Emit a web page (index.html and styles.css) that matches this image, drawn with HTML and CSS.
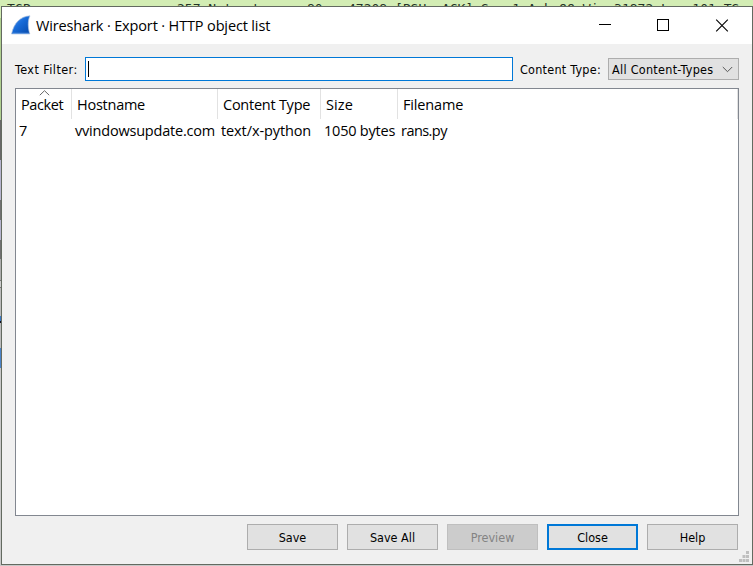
FILE: index.html
```html
<!DOCTYPE html>
<html lang="en">
<head>
<meta charset="utf-8">
<title>Wireshark · Export · HTTP object list</title>
<link rel="stylesheet" href="styles.css">
</head>
<body>
<div class="backdrop">
  <div class="packet-line"><span class="proto">TCP</span><span class="len">257 Net</span><span class="dot">t</span><span class="port">80</span><span class="info">47208 [PSH, ACK] Seq=1 Ack=99 Win=31872 Len=101 TS</span></div>
</div>
<main class="dialog">
  <header class="titlebar">
    <svg class="fin" width="20" height="20" viewBox="0 0 20 20"><defs><linearGradient id="fin" x1="0" y1="0" x2="1" y2="1"><stop offset="0" stop-color="#5a9af0"/><stop offset=".45" stop-color="#176bd8"/><stop offset="1" stop-color="#0749a9"/></linearGradient></defs><path d="M.5 19C3 8 9 1.500 19 .8C16.500 6 17 13 18.800 19Z" fill="url(#fin)" stroke="#b3c6df" stroke-width=".7"/><path d="M1.500 18.300H18" stroke="#6b9fe3" stroke-width="1"/></svg>
    <h1>Wireshark · Export · HTTP object list</h1>
    <svg class="controls" width="132" height="14" viewBox="0 0 132 14" fill="none" stroke="#000"><path d="M0 5.500H12M58.500 .5H69.500V11.500H58.500Z" shape-rendering="crispEdges"/><path d="M117.200 .7L128.800 12.300M128.800 .7L117.200 12.300" stroke-width="1.100"/></svg>
  </header>
  <section class="content">
    <div class="filters">
      <label class="label-filter">Text Filter:</label>
      <div class="input"><i class="caret"></i></div>
      <label class="label-type">Content Type:</label>
      <div class="combo"><span>All Content-Types</span><svg width="11" height="7" viewBox="0 0 11 7"><path d="M.8 1L5.500 5.700L10.200 1" fill="none" stroke="#555"/></svg></div>
    </div>
    <div class="table">
      <div class="row head">
        <div><svg class="sort" width="11" height="6" viewBox="0 0 11 6"><path d="M.8 5.200L5.500 .7L10.200 5.200" fill="none" stroke="#666"/></svg><span class="h-packet">Packet</span></div><div><span class="h-host">Hostname</span></div><div><span class="h-type">Content Type</span></div><div><span class="h-size">Size</span></div><div><span class="h-file">Filename</span></div>
      </div>
      <div class="row data">
        <div>7</div><div><span class="d-host">vvindowsupdate.com</span></div><div><span class="d-type">text/x-python</span></div><div><span class="d-size">1050 bytes</span></div><div><span class="d-file">rans.py</span></div>
      </div>
    </div>
    <footer class="actions">
      <div class="button">Save</div><div class="button">Save All</div><div class="button disabled">Preview</div><div class="button primary">Close</div><div class="button">Help</div>
    </footer>
  </section>
  <svg class="grip" width="10" height="11" viewBox="0 0 10 11" fill="#bfbfbf"><path d="M7 0h3v3H7zM3.500 4h3v3h-3zM7 4h3v3H7zM0 8h3v3H0zM3.500 8h3v3h-3zM7 8h3v3H7z"/></svg>
</main>
</body>
</html>
```
FILE: styles.css
```css
* { box-sizing: border-box; }
body { margin: 0; width: 753px; height: 566px; overflow: hidden; position: relative; background: #c8c8c8; font-family: "Open Sans", "Noto Sans", sans-serif; color: #000; }
.backdrop { position: absolute; inset: 0; background: linear-gradient(#b0d090 0 120px, #686868 120px 160px, #b6b4cf 160px 200px, #707070 200px 220px, #b6b4cf 220px 240px, #707070 240px 259px, #adadad 259px 280px, #777 280px 281px, #ccc 281px 287px, #777 287px 288px, #bbb 288px 316px, #3b79c4 316px 321px, #112 321px 323px, #bbb 323px 348px, #4b83c8 348px 368px, #c8c8c8 368px); }
.packet-line { height: 18px; background: #d3edb4; display: flex; padding: 0 0 0 7px; font: 13px/17px "DejaVu Sans Mono", monospace; color: #243327; white-space: pre; }
.packet-line span { flex: none; }
.proto { width: 170px; }
.len { width: 75px; }
.dot { width: 55px; }
.port { width: 41px; }
.dialog { position: absolute; left: 1px; top: 6px; width: 752px; height: 559px; border: 1px solid #636a60; background: #f0f0f0; display: flex; flex-direction: column; }
.titlebar { height: 37px; flex: none; background: #fff; display: flex; align-items: center; padding: 0 21px 0 9px; }
.fin { margin-top: -1px; }
h1 { margin: 0 auto 0 5px; font-size: 14.5px; font-weight: 400; line-height: 20px; letter-spacing: -.14px; white-space: nowrap; }
.content { padding: 13px 13px 0; display: flex; flex-direction: column; }
.filters { height: 24px; display: flex; align-items: center; font: 12.500px/16px "DejaVu Sans Condensed", "DejaVu Sans", sans-serif; font-stretch: condensed; white-space: nowrap; }
.label-filter { width: 70px; letter-spacing: .44px; padding-top: 2px; }
.input { width: 428px; height: 24px; background: #fff; border: 1px solid #0078d7; padding: 3px 2px; }
.caret { display: block; width: 1px; height: 16px; background: #000; }
.label-type { width: 88px; margin-left: 7px; letter-spacing: .25px; padding-top: 2px; }
.combo { width: 131px; height: 22px; border: 1px solid #adadad; background: #e1e1e1; display: flex; align-items: center; justify-content: space-between; padding: 0 5px 0 3px; }
.combo span { letter-spacing: .28px; padding-top: 1px; }
.table { height: 428px; margin-top: 7px; background: #fff; border: 1px solid #828790; width: 724px; }
.row { display: grid; grid-template-columns: 56px 146px 103px 77px 340px; font-size: 14.500px; white-space: nowrap; }
.row > div { position: relative; }
.head { height: 30px; line-height: 32px; }
.head > div { height: 30px; border-right: 1px solid #e2e2e2; padding-left: 5px; }
.data { height: 24px; line-height: 24px; }
.data > div { padding-left: 3px; }
.h-packet { letter-spacing: -.4px; }
.h-host { letter-spacing: -.25px; }
.h-type { letter-spacing: -.25px; }
.h-size { letter-spacing: .1px; }
.h-file { letter-spacing: -.15px; }
.d-host { letter-spacing: -.2px; }
.d-type { letter-spacing: -.1px; }
.d-size { letter-spacing: -.22px; }
.d-file { letter-spacing: -.55px; }
.sort { position: absolute; left: 23px; top: 1px; }
.actions { display: flex; justify-content: flex-end; gap: 9px; padding: 8px 1px 0 0; }
.button { width: 91px; height: 26px; border: 1px solid #adadad; background: #e1e1e1; text-align: center; font: 12.500px/26px "DejaVu Sans Condensed", "DejaVu Sans", sans-serif; font-stretch: condensed; }
.disabled { border-color: #bfbfbf; background: #ccc; color: #838383; }
.primary { border: 2px solid #0078d7; line-height: 24px; }
.grip { position: absolute; right: 3px; bottom: 2px; }
```
